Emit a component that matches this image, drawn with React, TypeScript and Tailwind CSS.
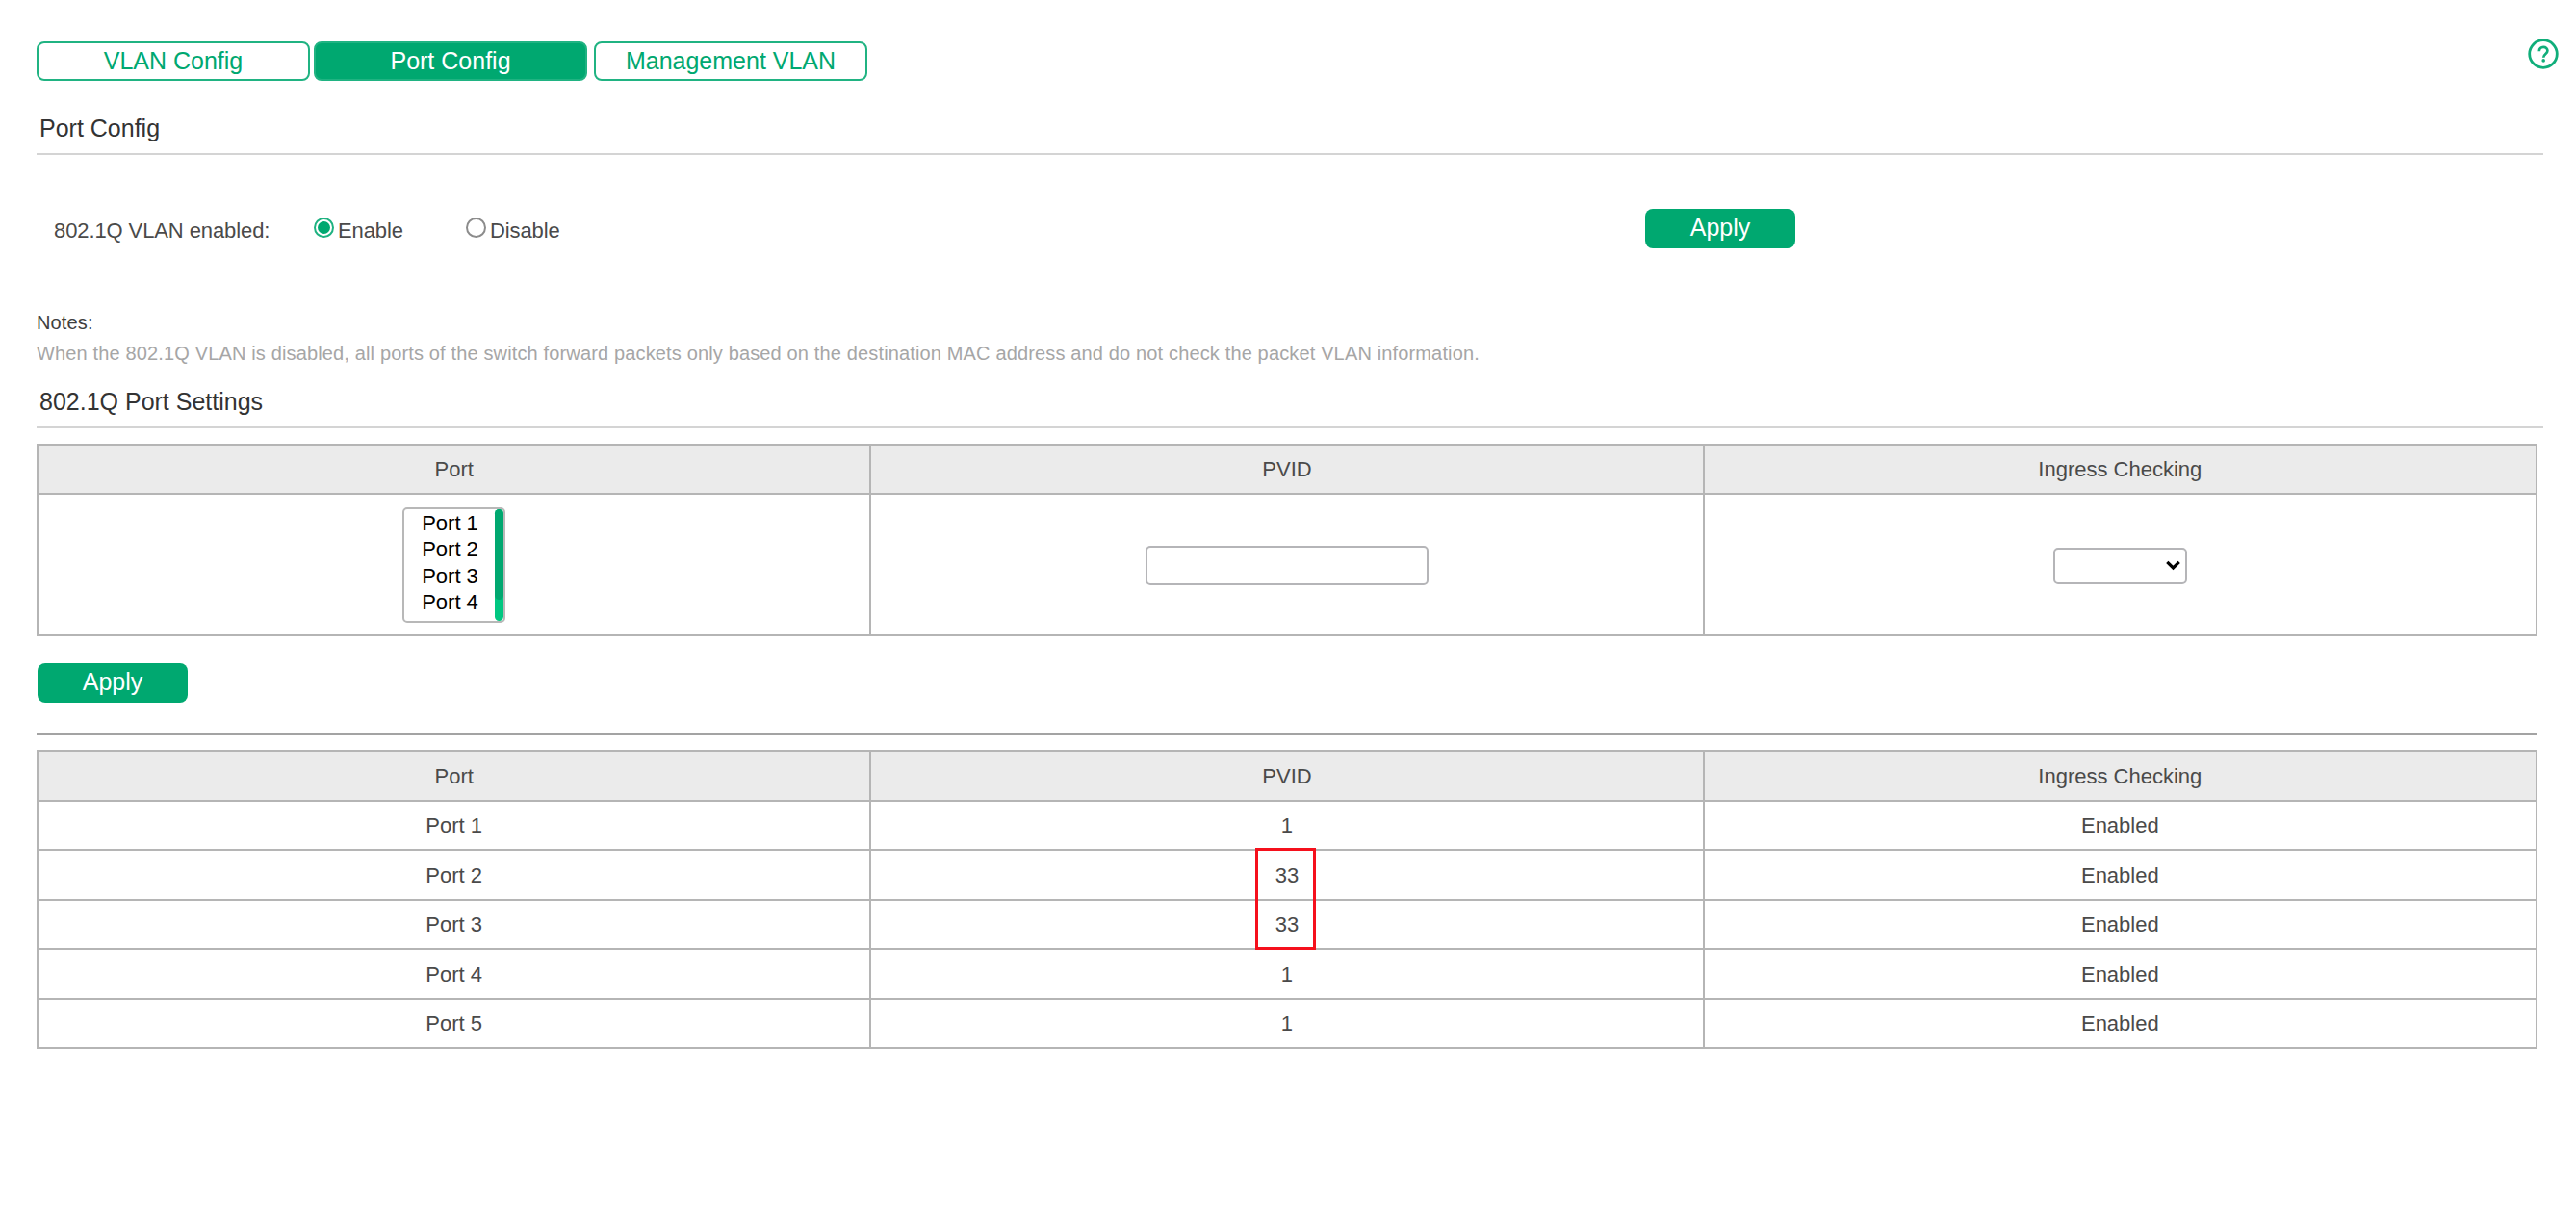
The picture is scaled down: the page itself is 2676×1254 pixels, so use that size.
import { useState } from 'react';
import type { ReactNode } from 'react';
import clsx from 'clsx';

const TABS = ['VLAN Config', 'Port Config', 'Management VLAN'];
const COLUMNS = ['Port', 'PVID', 'Ingress Checking'];

const PORTS = [
  { name: 'Port 1', pvid: 1, ingress: 'Enabled', height: 'h-[51px]' },
  { name: 'Port 2', pvid: 33, ingress: 'Enabled', height: 'h-[52px]', marked: true },
  { name: 'Port 3', pvid: 33, ingress: 'Enabled', height: 'h-[51px]' },
  { name: 'Port 4', pvid: 1, ingress: 'Enabled', height: 'h-[52px]' },
  { name: 'Port 5', pvid: 1, ingress: 'Enabled', height: 'h-[51px]' },
];

function SectionTitle({ children, className }: { children: ReactNode; className?: string }) {
  return (
    <h2 className={clsx('pl-[3px] text-[25px] leading-[30px] text-[#333333] border-b-2', className)}>
      {children}
    </h2>
  );
}

function ApplyButton({ className }: { className?: string }) {
  return (
    <button
      className={clsx(
        'block w-[156px] h-[41px] pb-[2px] rounded-[8px] bg-[#00a870] text-[25px] leading-[39px] text-white',
        className,
      )}
    >
      Apply
    </button>
  );
}

interface RadioProps {
  label: string;
  checked: boolean;
  onSelect: () => void;
  className?: string;
}

function Radio({ label, checked, onSelect, className }: RadioProps) {
  return (
    <button className={clsx('flex items-start text-left', className)} onClick={onSelect}>
      <span
        className={clsx(
          'mt-[9px] w-[21px] h-[21px] rounded-full border-2 flex items-center justify-center',
          checked ? 'border-[#1fb281]' : 'border-[#8c8c8c]',
        )}
      >
        {checked && <span className="w-[13px] h-[13px] rounded-full bg-[#00a870]" />}
      </span>
      <span className="mt-[8px] ml-[4px] leading-[30px] tracking-[-0.1px]">{label}</span>
    </button>
  );
}

function TableHead({ className }: { className: string }) {
  return (
    <thead>
      <tr className={clsx('bg-[#ebebeb]', className)}>
        {COLUMNS.map((col) => (
          <th key={col} className="p-0 border-2 border-[#b5b5b5] font-normal">
            {col}
          </th>
        ))}
      </tr>
    </thead>
  );
}

export default function App() {
  const [tab, setTab] = useState('Port Config');
  const [enabled, setEnabled] = useState(true);

  return (
    <div className="min-h-[1254px] bg-white pl-[38px] font-['Liberation_Sans',Arial,sans-serif] text-[22px] text-[#4a4a4a]">
      {/* Tabs and help */}
      <div className="flex items-start justify-between pr-[18px]">
        <div className="flex pt-[43px]">
          {TABS.map((name, i) => (
            <button
              key={name}
              onClick={() => setTab(name)}
              className={clsx(
                'w-[284px] h-[41px] pb-[1px] rounded-[8px] border-2 border-[#20b382] text-[25px] leading-[36px]',
                i === 1 && 'ml-[4px]',
                i === 2 && 'ml-[7px]',
                tab === name ? 'bg-[#00a870] border-[#00a870] text-white' : 'bg-white text-[#00a870]',
              )}
            >
              {name}
            </button>
          ))}
        </div>
        <svg className="mt-[40px] w-8 h-8" viewBox="0 0 32 32" fill="none" stroke="#10ae7a">
          <circle cx="16" cy="16" r="14.3" strokeWidth="2.8" />
          <path d="M11.8 13.2c0-2.6 1.8-4.3 4.3-4.3s4.3 1.6 4.3 3.9c0 3.2-4.2 3.2-4.2 7" strokeWidth="2.7" />
          <circle cx="16.2" cy="22.9" r="1.8" fill="#10ae7a" stroke="none" />
        </svg>
      </div>

      <div className="w-[2604px]">
        <SectionTitle className="pt-[34px] pb-[11px] border-[#d4d4d4]">Port Config</SectionTitle>

        {/* Global switch */}
        <div className="flex items-start h-[41px] mt-[56px]">
          <span className="w-[270px] ml-[18px] mt-[8px] leading-[30px] tracking-[-0.1px]">802.1Q VLAN enabled:</span>
          <Radio label="Enable" className="w-[158px]" checked={enabled} onSelect={() => setEnabled(true)} />
          <Radio label="Disable" className="w-[1225px]" checked={!enabled} onSelect={() => setEnabled(false)} />
          <ApplyButton />
        </div>

        <div className="mt-[61px] text-[20px] leading-[32px] tracking-[0.147px]">
          <p className="text-[#404040]">Notes:</p>
          <p className="text-[#a6a6a6]">
            When the 802.1Q VLAN is disabled, all ports of the switch forward packets only based on the destination MAC
            address and do not check the packet VLAN information.
          </p>
        </div>

        <SectionTitle className="mt-[19px] pb-[11px] border-[#d4d4d4]">802.1Q Port Settings</SectionTitle>
      </div>

      <div className="w-[2598px]">
        {/* Port settings form */}
        <table className="w-full mt-[16px] table-fixed border-collapse text-center">
          <TableHead className="h-[51px]" />
          <tbody>
            <tr className="h-[147px]">
              <td className="p-0 border-2 border-[#b5b5b5]">
                <div className="mx-auto w-[107px] h-[120px] flex justify-between rounded-[5px] border-2 border-[#b8b8b8] overflow-hidden">
                  <ul className="pt-px pl-[18px] text-left leading-[27.5px] text-black">
                    {PORTS.slice(0, 4).map((port) => (
                      <li key={port.name}>{port.name}</li>
                    ))}
                  </ul>
                  <div className="w-[9px] rounded-full bg-[#00c781]">
                    <div className="h-[94px] rounded-full bg-[#00a870]" />
                  </div>
                </div>
              </td>
              <td className="p-0 border-2 border-[#b5b5b5]">
                <input className="block mx-auto mt-px w-[294px] h-[41px] px-2 rounded-[5px] border-2 border-[#b5b5b8]" />
              </td>
              <td className="p-0 border-2 border-[#b5b5b5]">
                <button className="mx-auto mt-[2px] w-[139px] h-[38px] pr-[5px] flex items-center justify-end rounded-[5px] border-2 border-[#b5b5b8]">
                  <svg className="w-[15px] h-[11px]" viewBox="0 0 15 11" fill="none" stroke="#000" strokeWidth="3.2">
                    <path d="M1.3 1.8 7.5 8 13.7 1.8" />
                  </svg>
                </button>
              </td>
            </tr>
          </tbody>
        </table>

        <ApplyButton className="ml-px mt-[28px]" />
        <hr className="mt-[32px] border-t-2 border-[#a3a3a3]" />

        {/* Current port status */}
        <table className="w-full mt-[15px] table-fixed border-collapse text-center">
          <TableHead className="h-[52px]" />
          <tbody>
            {PORTS.map((port) => (
              <tr key={port.name} className={port.height}>
                <td className="p-0 border-2 border-[#b5b5b5]">{port.name}</td>
                <td className="p-0 border-2 border-[#b5b5b5]">
                  <div className="relative">
                    {port.pvid}
                    {port.marked && (
                      <div className="absolute left-1/2 -top-[12px] -ml-[33px] w-[63px] h-[106px] border-[3px] border-[#f5101c]" />
                    )}
                  </div>
                </td>
                <td className="p-0 border-2 border-[#b5b5b5]">{port.ingress}</td>
              </tr>
            ))}
          </tbody>
        </table>
      </div>
    </div>
  );
}
